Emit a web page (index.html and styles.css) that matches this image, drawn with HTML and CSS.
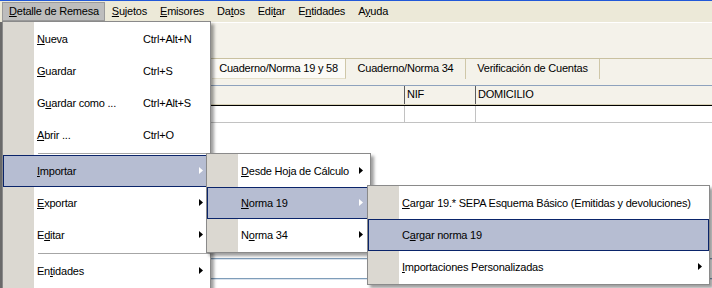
FILE: index.html
```html
<!DOCTYPE html>
<html lang="es">
<head>
<meta charset="utf-8">
<title>Detalle de Remesa</title>
<link rel="stylesheet" href="styles.css">
</head>
<body>
<div class="titleedge"></div>
<nav class="menubar">
  <span class="mb-item open"><u>D</u>etalle de Remesa</span>
  <span class="mb-item"><u>S</u>ujetos</span>
  <span class="mb-item"><u>E</u>misores</span>
  <span class="mb-item">Da<u>t</u>os</span>
  <span class="mb-item">Edi<u>t</u>ar</span>
  <span class="mb-item">E<u>n</u>tidades</span>
  <span class="mb-item">A<u>y</u>uda</span>
</nav>
<div class="app">
  <div class="whiteline"></div>
  <div class="toolbar"></div>
  <div class="tabs">
    <span class="tab sel">Cuaderno/Norma 19 y 58</span>
    <span class="tab t2">Cuaderno/Norma 34</span>
    <span class="tab t3">Verificación de Cuentas</span>
  </div>
  <div class="tabgap"></div>
  <div class="grid">
    <div class="ghead">
      <span class="gc c1"></span><span class="gc c2">NIF</span><span class="gc c3">DOMICILIO</span>
    </div>
    <div class="grow">
      <span class="gc c1"></span><span class="gc c2"></span><span class="gc c3"></span>
    </div>
  </div>
  <div class="blank"></div>
  <div class="field"></div>
  <div class="field-bottom"></div>
</div>

<div class="menu main">
  <div class="mi"><span class="lbl"><u>N</u>ueva</span><span class="key">Ctrl+Alt+N</span><span class="arr"></span></div>
  <div class="mi"><span class="lbl"><u>G</u>uardar</span><span class="key">Ctrl+S</span><span class="arr"></span></div>
  <div class="mi"><span class="lbl">G<u>u</u>ardar como ...</span><span class="key">Ctrl+Alt+S</span><span class="arr"></span></div>
  <div class="mi"><span class="lbl"><u>A</u>brir ...</span><span class="key">Ctrl+O</span><span class="arr"></span></div>
  <div class="msep"></div>
  <div class="mi hot"><span class="lbl"><u>I</u>mportar</span><span class="key"></span><span class="arr"><svg width="4" height="7" viewBox="0 0 4 7"><path d="M0 0L4 3.5L0 7Z"/></svg></span></div>
  <div class="mi"><span class="lbl"><u>E</u>xportar</span><span class="key"></span><span class="arr"><svg width="4" height="7" viewBox="0 0 4 7"><path d="M0 0L4 3.5L0 7Z"/></svg></span></div>
  <div class="mi"><span class="lbl">E<u>d</u>itar</span><span class="key"></span><span class="arr"><svg width="4" height="7" viewBox="0 0 4 7"><path d="M0 0L4 3.5L0 7Z"/></svg></span></div>
  <div class="msep"></div>
  <div class="mi"><span class="lbl">En<u>t</u>idades</span><span class="key"></span><span class="arr"><svg width="4" height="7" viewBox="0 0 4 7"><path d="M0 0L4 3.5L0 7Z"/></svg></span></div>
</div>

<div class="menu sub1">
  <div class="mi"><span class="lbl"><u>D</u>esde Hoja de Cálculo</span><span class="arr"><svg width="4" height="7" viewBox="0 0 4 7"><path d="M0 0L4 3.5L0 7Z"/></svg></span></div>
  <div class="mi hot"><span class="lbl"><u>N</u>orma 19</span><span class="arr"><svg width="4" height="7" viewBox="0 0 4 7"><path d="M0 0L4 3.5L0 7Z"/></svg></span></div>
  <div class="mi"><span class="lbl">N<u>o</u>rma 34</span><span class="arr"><svg width="4" height="7" viewBox="0 0 4 7"><path d="M0 0L4 3.5L0 7Z"/></svg></span></div>
</div>

<div class="menu sub2">
  <div class="mi"><span class="lbl"><u>C</u>argar 19.* SEPA Esquema Básico (Emitidas y devoluciones)</span><span class="arr"></span></div>
  <div class="mi hot"><span class="lbl">C<u>a</u>rgar norma 19</span><span class="arr"></span></div>
  <div class="mi"><span class="lbl"><u>I</u>mportaciones Personalizadas</span><span class="arr"><svg width="4" height="7" viewBox="0 0 4 7"><path d="M0 0L4 3.5L0 7Z"/></svg></span></div>
</div>
</body>
</html>
```

FILE: styles.css
```css
html, body {
  margin: 0;
  padding: 0;
}
body {
  width: 712px;
  height: 288px;
  overflow: hidden;
  position: relative;
  background: #ffffff;
  font-family: "Liberation Sans", Arial, sans-serif;
  font-size: 11px;
  letter-spacing: -0.22px;
  color: #000;
}
u {
  text-decoration: underline;
  text-underline-offset: 1px;
}

.titleedge {
  height: 1px;
  background: #2158d8;
}

.menubar {
  display: flex;
  align-items: flex-start;
  height: 21px;
  box-sizing: border-box;
  padding: 1px 0 0 2px;
  background: #ece9d8;
}
.mb-item {
  height: 19px;
  line-height: 17px;
  padding: 0 5px 0 6px;
  border: 1px solid transparent;
  box-sizing: border-box;
  white-space: nowrap;
}
.mb-item.open {
  background: #bdbdbd;
  border-color: #9a9a9a;
}

.app {
  border-left: 2px solid #6a6a6a;
}
.whiteline {
  height: 1px;
  background: #ffffff;
}
.toolbar {
  height: 35px;
  background: #f4f2ea;
}
.tabs {
  display: flex;
  height: 21px;
  box-sizing: border-box;
  border-top: 1px solid #c9c1a0;
  padding-left: 210px;
  background: #f4f2ea;
}
.tab {
  height: 20px;
  line-height: 19px;
  box-sizing: border-box;
  border-right: 1px solid #cfc7a8;
  text-align: center;
  white-space: nowrap;
}
.tab.sel {
  width: 134px;
  background: #fbfaf6;
  border-bottom: 1px solid #e4dfca;
}
.tab.t2 { width: 120px; }
.tab.t3 { width: 134px; }

.tabgap {
  height: 6px;
  background: #f4f2ea;
}

.grid {
  border-top: 1px solid #8ea2bd;
}
.ghead {
  display: flex;
  height: 19px;
  box-sizing: border-box;
  background: #f4f2ea;
  border-bottom: 1px solid #d8d2b8;
}
.ghead .gc {
  line-height: 17px;
  border-right: 1px solid #5c5c5c;
  padding-left: 2px;
}
.grow {
  display: flex;
  height: 18px;
  box-sizing: border-box;
  border-top: 1px solid #000;
  border-bottom: 1px solid #c2c2c2;
  background: #fff;
}
.grow .gc {
  border-right: 1px solid #c2c2c2;
}
.gc {
  box-sizing: border-box;
  white-space: nowrap;
}
.c1 { width: 403px; padding-left: 0; }
.c2 { width: 71px; }
.c3 { flex: 1; border-right: none !important; }

.blank {
  height: 135px;
  background: #fff;
}
.field {
  height: 21px;
  box-sizing: border-box;
  border-top: 1px solid #7f9db9;
  border-bottom: 1px solid #7f9db9;
  background: linear-gradient(#dbe4ee, #dbe4ee) top / 100% 1px no-repeat #fff;
}
.field-bottom {
  height: 10px;
  background: linear-gradient(#dbe4ee, #dbe4ee) top / 100% 1px no-repeat #fff;
}

/* ---------- menus (overlay) ---------- */
.menu {
  position: absolute;
  box-sizing: border-box;
  border: 1px solid #8a8a8a;
  padding: 1px 0;
  background: linear-gradient(to right, #dbd8d1 31px, #ffffff 31px);
  box-shadow: 3px 3px 3px rgba(0, 0, 0, 0.38);
}
.menu.main {
  left: 2px;
  top: 21px;
  width: 209px;
  padding-bottom: 40px;
}
.menu.sub1 {
  left: 206px;
  top: 153px;
  width: 165px;
}
.menu.sub2 {
  left: 367px;
  top: 185px;
  width: 343px;
}

.mi {
  display: flex;
  align-items: center;
  height: 32px;
  box-sizing: border-box;
  border: 1px solid transparent;
  padding: 0 6px 1px 33px;
  white-space: nowrap;
}
.mi.hot {
  background: #b6bdd2;
  border-color: #0a246a;
}
.main .lbl {
  width: 106px;
}
.main .key {
  flex: 1;
}
.sub1 .lbl,
.sub2 .lbl {
  flex: 1;
}
.arr {
  width: 4px;
  height: 7px;
  display: flex;
}
.arr svg {
  display: block;
  fill: #000;
}
.mi.hot .arr svg {
  fill: #ffffff;
}
.msep {
  height: 4px;
  box-sizing: border-box;
  margin-left: 35px;
  border-bottom: 1px solid #a6a6a6;
  padding-bottom: 1px;
  position: relative;
  top: -1px;
}
```
